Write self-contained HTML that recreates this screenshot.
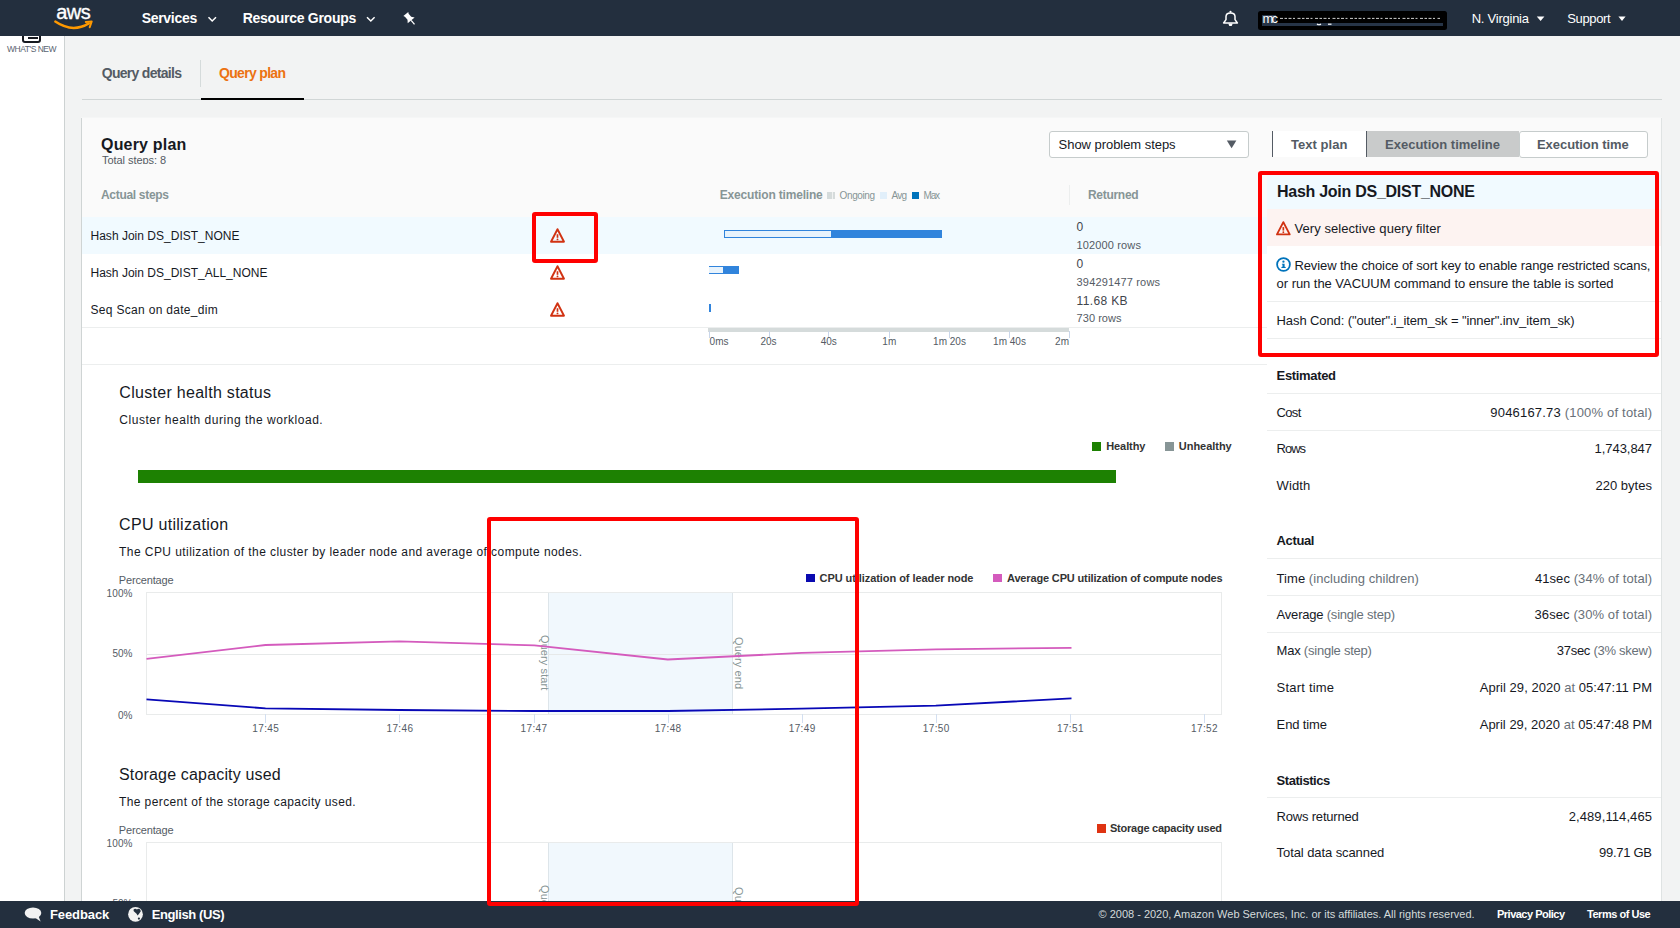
<!DOCTYPE html>
<html><head><meta charset="utf-8"><style>
html,body{margin:0;padding:0;}
body{width:1680px;height:928px;overflow:hidden;position:relative;background:#f2f3f3;font-family:"Liberation Sans", sans-serif;}
.t{position:absolute;white-space:nowrap;line-height:1;}
svg{position:absolute;overflow:visible;}
</style></head><body>
<div style="position:absolute;left:0px;top:36px;width:64px;height:865px;background:#fff;"></div><div style="position:absolute;left:64px;top:36px;width:1px;height:865px;background:#cdd2d2;"></div><div style="position:absolute;left:22px;top:28px;width:19px;height:15px;border:2.5px solid #16191f;border-radius:3px;box-sizing:border-box"></div><div style="position:absolute;left:28px;top:37px;width:10px;height:1.5px;background:#16191f;"></div><div style="position:absolute;left:0px;top:0px;width:1680px;height:36px;background:#232f3e;"></div><svg style="left:0;top:0" width="120" height="36"><text x="56.3" y="18.5" font-family="Liberation Sans" font-size="20" fill="#fff" stroke="#fff" stroke-width="0.35" letter-spacing="-0.6">aws</text><path d="M55.3 21.6 Q72.5 33.3 88.8 23.4" stroke="#ff9900" stroke-width="2.4" fill="none" stroke-linecap="round"/><path d="M85.8 21.9 L91.7 21.5 L89.7 27.2" stroke="#ff9900" stroke-width="2" fill="none" stroke-linecap="round" stroke-linejoin="round"/></svg><svg style="left:0;top:0" width="420" height="36"><polyline points="208.5,17.2 212.2,21 216,17.2" stroke="#fff" stroke-width="1.5" fill="none"/><polyline points="367,17.2 370.8,21 374.6,17.2" stroke="#fff" stroke-width="1.5" fill="none"/><g transform="translate(410,19) rotate(-40)"><path d="M-3.2 -6.5 L3.2 -6.5 L2.4 -5 L2.4 -1 L4.5 1.8 L-4.5 1.8 L-2.4 -1 L-2.4 -5 Z" fill="#fff"/><path d="M0 1.8 L0 7" stroke="#fff" stroke-width="1.3"/></g></svg><svg style="left:0;top:0" width="1680" height="36"><path d="M1223.6 23 L1237.4 23 L1235 19.6 L1235 16.6 C1235 14.1 1233.2 12.9 1230.5 12.9 C1227.8 12.9 1226 14.1 1226 16.6 L1226 19.6 Z" stroke="#fff" stroke-width="1.5" fill="none" stroke-linejoin="round"/><circle cx="1230.5" cy="11.8" r="1.1" fill="#fff"/><path d="M1228.3 23.6 L1232.7 23.6 L1231.7 25.9 L1229.3 25.9 Z" fill="#fff"/></svg><div style="position:absolute;left:1258.2px;top:11.2px;width:188.7px;height:18.5px;background:#000;border-radius:2.5px"></div><div style="position:absolute;left:1262.2px;top:15px;width:14.3px;height:8.5px;background:#2c3a4c;"></div><div style="position:absolute;left:1262.2px;top:23.3px;width:181px;height:2.7px;background:#263447;"></div><svg style="left:0;top:0" width="1680" height="36"><path d="M1280 18.4 L1440 18.4" stroke="#fff" stroke-width="0.9" stroke-dasharray="3 1.5 2.5 1.5 3 1.5 2 2.5" opacity="0.9"/><path d="M1317 24 q2 1.5 4 0" stroke="#fff" stroke-width="1.2" fill="none"/><path d="M1328 24.2 l3.5 0" stroke="#fff" stroke-width="1.2"/></svg><svg style="left:0;top:0" width="1680" height="36"><path d="M1536.8 16.6 L1544.4 16.6 L1540.6 21 Z" fill="#fff"/><path d="M1618.4 16.6 L1625.6 16.6 L1622 21 Z" fill="#fff"/></svg><div style="position:absolute;left:200px;top:60px;width:1px;height:27px;background:#d5dbdb;"></div><div style="position:absolute;left:82px;top:99px;width:1580px;height:1px;background:#d1d6d6;"></div><div style="position:absolute;left:201px;top:97.7px;width:103px;height:2.5px;background:#000;"></div><div style="position:absolute;left:81px;top:117px;width:1581px;height:1px;background:#f5f6f6;"></div><div style="position:absolute;left:81px;top:118px;width:1581px;height:810px;background:#fafafa;"></div><div style="position:absolute;left:81px;top:118px;width:1px;height:810px;background:#cfd4d4;"></div><div style="position:absolute;left:1661px;top:118px;width:1px;height:810px;background:#dfe3e3;"></div><div style="position:absolute;left:82px;top:217px;width:1185px;height:684px;background:#fff;"></div><div style="position:absolute;left:1267px;top:175px;width:394px;height:726px;background:#fff;"></div><div style="position:absolute;left:95px;top:150px;width:100px;height:14px;overflow:hidden"><div class="t" style="left:7px;top:4.69px;font-size:11px;color:#545b64;letter-spacing:-0.05px">Total steps: 8</div></div><div style="position:absolute;left:1049px;top:130.5px;width:200px;height:27px;background:#fff;border:1px solid #c6cccc;border-radius:3px;box-sizing:border-box"></div><svg style="left:0;top:0" width="1680" height="200"><path d="M1226.8 140.6 L1236.4 140.6 L1231.6 148.2 Z" fill="#545b64"/></svg><div style="position:absolute;left:1272px;top:131px;width:95px;height:26px;background:#fff;border-left:1.5px solid #545b64;border-right:1.5px solid #545b64;box-sizing:border-box"></div><div style="position:absolute;left:1367px;top:131px;width:152px;height:26px;background:#c9cbcb;"></div><div style="position:absolute;left:1518.5px;top:130.5px;width:129.5px;height:27px;background:#fff;border:1px solid #c6cccc;border-radius:3px;box-sizing:border-box"></div><div style="position:absolute;left:827.2px;top:192.4px;width:7.8px;height:6.5px;background:#d5dbdb;"></div><div style="position:absolute;left:831.6px;top:192.4px;width:1.8px;height:6.5px;background:#f0f2f2;"></div><div style="position:absolute;left:880.3px;top:192.4px;width:7px;height:6.5px;background:#e1effa;"></div><div style="position:absolute;left:912px;top:192.4px;width:7px;height:6.5px;background:#0073bb;"></div><div style="position:absolute;left:1069px;top:184.5px;width:1px;height:20.5px;background:#eceeee;"></div><div style="position:absolute;left:82px;top:217.3px;width:1185px;height:36.7px;background:#f1faff;"></div><div style="position:absolute;left:82px;top:327px;width:1185px;height:1px;background:#eceeee;"></div><div style="position:absolute;left:82px;top:364px;width:1185px;height:1px;background:#eceeee;"></div><svg style="left:549.9px;top:228.4px" width="15.0" height="14.6" viewBox="0 0 15 14.6"><path d="M7.5 1.2 L14 13.7 L1 13.7 Z" stroke="#d13212" stroke-width="1.9" fill="none" stroke-linejoin="round"/><path d="M7.5 6.2 L7.5 9.8" stroke="#d13212" stroke-width="1.7"/><circle cx="7.5" cy="11.4" r="0.95" fill="#d13212"/></svg><svg style="left:549.9px;top:265.0px" width="15.0" height="14.6" viewBox="0 0 15 14.6"><path d="M7.5 1.2 L14 13.7 L1 13.7 Z" stroke="#d13212" stroke-width="1.9" fill="none" stroke-linejoin="round"/><path d="M7.5 6.2 L7.5 9.8" stroke="#d13212" stroke-width="1.7"/><circle cx="7.5" cy="11.4" r="0.95" fill="#d13212"/></svg><svg style="left:549.9px;top:302.0px" width="15.0" height="14.6" viewBox="0 0 15 14.6"><path d="M7.5 1.2 L14 13.7 L1 13.7 Z" stroke="#d13212" stroke-width="1.9" fill="none" stroke-linejoin="round"/><path d="M7.5 6.2 L7.5 9.8" stroke="#d13212" stroke-width="1.7"/><circle cx="7.5" cy="11.4" r="0.95" fill="#d13212"/></svg><div style="position:absolute;left:723.5px;top:229.8px;width:108px;height:8px;background:#e8f3fc;border:1.2px solid #3184dc;border-right:none;box-sizing:border-box"></div><div style="position:absolute;left:831.3px;top:229.8px;width:110.7px;height:8px;background:#3184dc;"></div><div style="position:absolute;left:709px;top:266px;width:14px;height:8.2px;background:#e8f3fc;border:1.2px solid #3184dc;border-left:none;border-right:none;box-sizing:border-box"></div><div style="position:absolute;left:723px;top:266px;width:16px;height:8.2px;background:#3184dc;"></div><div style="position:absolute;left:709px;top:304px;width:2.2px;height:8px;background:#3184dc;"></div><div style="position:absolute;left:708.3px;top:327.7px;width:360.7px;height:4px;background:#d5dbdb;"></div><div style="position:absolute;left:708.7px;top:331px;width:1px;height:7px;background:#c9d6ea;"></div><div style="position:absolute;left:768.5px;top:331px;width:1px;height:7px;background:#c9d6ea;"></div><div style="position:absolute;left:828.3px;top:331px;width:1px;height:7px;background:#c9d6ea;"></div><div style="position:absolute;left:889.3px;top:331px;width:1px;height:7px;background:#c9d6ea;"></div><div style="position:absolute;left:949.3px;top:331px;width:1px;height:7px;background:#c9d6ea;"></div><div style="position:absolute;left:1009.3px;top:331px;width:1px;height:7px;background:#c9d6ea;"></div><div style="position:absolute;left:1068.5px;top:331px;width:1px;height:7px;background:#c9d6ea;"></div><div style="position:absolute;left:1267px;top:175px;width:394px;height:34.2px;background:#f1faff;"></div><div style="position:absolute;left:1267px;top:209.2px;width:394px;height:37.3px;background:#fdf3f1;"></div><svg style="left:1276.0px;top:221.2px" width="14.7" height="14.3" viewBox="0 0 15 14.6"><path d="M7.5 1.2 L14 13.7 L1 13.7 Z" stroke="#d13212" stroke-width="1.9" fill="none" stroke-linejoin="round"/><path d="M7.5 6.2 L7.5 9.8" stroke="#d13212" stroke-width="1.7"/><circle cx="7.5" cy="11.4" r="0.95" fill="#d13212"/></svg><svg style="left:1275.8px;top:257.3px" width="15" height="15" viewBox="0 0 15 15"><circle cx="7.5" cy="7.5" r="6.4" stroke="#0073bb" stroke-width="1.8" fill="none"/><circle cx="7.45" cy="4.7" r="1.15" fill="#0073bb"/><path d="M5.9 6.7 L8.6 6.7 L8.6 9.7 L9.7 10.1 L9.7 11 L5.4 11 L5.4 10.1 L6.5 9.7 L6.5 7.6 L5.9 7.5 Z" fill="#0073bb"/></svg><div style="position:absolute;left:1267px;top:301px;width:394px;height:1px;background:#eceeee;"></div><div style="position:absolute;left:1267px;top:338px;width:394px;height:1px;background:#eceeee;"></div><div style="position:absolute;left:1267px;top:393px;width:394px;height:1px;background:#eceeee;"></div><div style="position:absolute;left:1267px;top:430px;width:394px;height:1px;background:#eceeee;"></div><div style="position:absolute;left:1267px;top:557.8px;width:394px;height:1px;background:#eceeee;"></div><div style="position:absolute;left:1267px;top:595px;width:394px;height:1px;background:#eceeee;"></div><div style="position:absolute;left:1267px;top:632.3px;width:394px;height:1px;background:#eceeee;"></div><div style="position:absolute;left:1267px;top:797.2px;width:394px;height:1px;background:#eceeee;"></div><div style="position:absolute;left:1091.9px;top:441.5px;width:9.1px;height:9.3px;background:#1d8102;"></div><div style="position:absolute;left:1164.8px;top:441.5px;width:9.2px;height:9.3px;background:#879596;"></div><div style="position:absolute;left:137.5px;top:470.2px;width:978.2px;height:12.8px;background:#1d8102;"></div><div style="position:absolute;left:146px;top:592px;width:1076px;height:122.5px;background:#fff;border:1px solid #e9ebeb;box-sizing:border-box"></div><div style="position:absolute;left:548.4px;top:593px;width:185px;height:121px;background:#f1f8fd;border-left:1px solid #dde5ea;border-right:1px solid #dde5ea;box-sizing:border-box"></div><div style="position:absolute;left:147px;top:654px;width:1074px;height:1px;background:#e6e9e9;"></div><div class="t" style="left:549.7px;top:634.8px;font-size:11px;color:#879596;transform-origin:0 0;transform:rotate(90deg);letter-spacing:0.1px">Query start</div><div class="t" style="left:744.1px;top:636.9px;font-size:11px;color:#879596;transform-origin:0 0;transform:rotate(90deg);letter-spacing:0.1px">Query end</div><div style="position:absolute;left:265.3px;top:714px;width:1px;height:9px;background:#d3dff0;"></div><div style="position:absolute;left:399.4px;top:714px;width:1px;height:9px;background:#d3dff0;"></div><div style="position:absolute;left:533.5px;top:714px;width:1px;height:9px;background:#d3dff0;"></div><div style="position:absolute;left:667.5999999999999px;top:714px;width:1px;height:9px;background:#d3dff0;"></div><div style="position:absolute;left:801.7px;top:714px;width:1px;height:9px;background:#d3dff0;"></div><div style="position:absolute;left:935.8px;top:714px;width:1px;height:9px;background:#d3dff0;"></div><div style="position:absolute;left:1069.8999999999999px;top:714px;width:1px;height:9px;background:#d3dff0;"></div><div style="position:absolute;left:1204.0px;top:714px;width:1px;height:9px;background:#d3dff0;"></div><div style="position:absolute;left:805.5px;top:573.8px;width:9.1px;height:8.6px;background:#0a0ab0;"></div><div style="position:absolute;left:992.8px;top:573.8px;width:9.4px;height:8.6px;background:#d45bbd;"></div><svg style="left:0;top:0" width="1680" height="928"><polyline points="146.5,658.8 265.5,645 399.4,641.4 534.3,645.4 667.8,659.5 801.7,652.9 935.8,649.3 1071.5,647.9" stroke="#d45bbd" stroke-width="1.8" fill="none" stroke-linejoin="round"/><polyline points="146.5,699.3 265.5,708.4 399.4,710 534.3,711 667.8,711 801.7,708.6 935.8,705.6 1071.5,698.4" stroke="#0808b6" stroke-width="1.8" fill="none" stroke-linejoin="round"/></svg><div style="position:absolute;left:146px;top:842px;width:1076px;height:122.5px;background:#fff;border:1px solid #e9ebeb;box-sizing:border-box"></div><div style="position:absolute;left:548.4px;top:843px;width:185px;height:121px;background:#f1f8fd;border-left:1px solid #dde5ea;border-right:1px solid #dde5ea;box-sizing:border-box"></div><div style="position:absolute;left:147px;top:904px;width:1074px;height:1px;background:#e6e9e9;"></div><div class="t" style="left:549.7px;top:884.8px;font-size:11px;color:#879596;transform-origin:0 0;transform:rotate(90deg);letter-spacing:0.1px">Query start</div><div class="t" style="left:744.1px;top:886.9px;font-size:11px;color:#879596;transform-origin:0 0;transform:rotate(90deg);letter-spacing:0.1px">Query end</div><div style="position:absolute;left:265.3px;top:964px;width:1px;height:9px;background:#d3dff0;"></div><div style="position:absolute;left:399.4px;top:964px;width:1px;height:9px;background:#d3dff0;"></div><div style="position:absolute;left:533.5px;top:964px;width:1px;height:9px;background:#d3dff0;"></div><div style="position:absolute;left:667.5999999999999px;top:964px;width:1px;height:9px;background:#d3dff0;"></div><div style="position:absolute;left:801.7px;top:964px;width:1px;height:9px;background:#d3dff0;"></div><div style="position:absolute;left:935.8px;top:964px;width:1px;height:9px;background:#d3dff0;"></div><div style="position:absolute;left:1069.8999999999999px;top:964px;width:1px;height:9px;background:#d3dff0;"></div><div style="position:absolute;left:1204.0px;top:964px;width:1px;height:9px;background:#d3dff0;"></div><div style="position:absolute;left:1097px;top:823.5px;width:8.8px;height:9px;background:#df3312;"></div><div class="t" id="t0" style="top:45.10px;font-size:8.5px;font-weight:400;color:#5a6470;letter-spacing:-0.477px;left:7.00px;">WHAT&#x27;S NEW</div><div class="t" id="t1" style="top:11.05px;font-size:14px;font-weight:700;color:#fff;letter-spacing:-0.301px;left:141.70px;">Services</div><div class="t" id="t2" style="top:11.05px;font-size:14px;font-weight:700;color:#fff;letter-spacing:-0.292px;left:242.80px;">Resource Groups</div><div class="t" id="t3" style="top:11.70px;font-size:13px;font-weight:400;color:#fff;letter-spacing:-2.000px;left:1262.60px;">mc</div><div class="t" id="t4" style="top:12.30px;font-size:13px;font-weight:400;color:#fff;letter-spacing:-0.243px;left:1471.70px;">N. Virginia</div><div class="t" id="t5" style="top:12.30px;font-size:13px;font-weight:400;color:#fff;letter-spacing:-0.358px;left:1567.30px;">Support</div><div class="t" id="t6" style="top:66.45px;font-size:14px;font-weight:700;color:#545b64;letter-spacing:-0.700px;left:101.70px;">Query details</div><div class="t" id="t7" style="top:66.45px;font-size:14px;font-weight:700;color:#ec7211;letter-spacing:-0.682px;left:219.00px;">Query plan</div><div class="t" id="t8" style="top:137.06px;font-size:16px;font-weight:700;color:#16191f;letter-spacing:0.191px;left:101.00px;">Query plan</div><div class="t" id="t9" style="top:138.00px;font-size:13px;font-weight:400;color:#16191f;letter-spacing:-0.046px;left:1058.60px;">Show problem steps</div><div class="t" id="t10" style="top:138.25px;font-size:13px;font-weight:700;color:#545b64;letter-spacing:0.049px;left:1291.00px;">Text plan</div><div class="t" id="t11" style="top:138.25px;font-size:13px;font-weight:700;color:#545b64;letter-spacing:0.007px;left:1385.00px;">Execution timeline</div><div class="t" id="t12" style="top:138.25px;font-size:13px;font-weight:700;color:#545b64;letter-spacing:-0.055px;left:1537.00px;">Execution time</div><div class="t" id="t13" style="top:188.64px;font-size:12px;font-weight:700;color:#879596;letter-spacing:-0.305px;left:101.00px;">Actual steps</div><div class="t" id="t14" style="top:188.74px;font-size:12px;font-weight:700;color:#879596;letter-spacing:-0.178px;left:719.80px;">Execution timeline</div><div class="t" id="t15" style="top:190.53px;font-size:10px;font-weight:400;color:#879596;letter-spacing:-0.402px;left:839.60px;">Ongoing</div><div class="t" id="t16" style="top:190.53px;font-size:10px;font-weight:400;color:#879596;letter-spacing:-0.731px;left:891.40px;">Avg</div><div class="t" id="t17" style="top:190.53px;font-size:10px;font-weight:400;color:#879596;letter-spacing:-1.253px;left:923.60px;">Max</div><div class="t" id="t18" style="top:188.94px;font-size:12px;font-weight:700;color:#879596;letter-spacing:-0.296px;left:1088.00px;">Returned</div><div class="t" id="t19" style="top:229.64px;font-size:12px;font-weight:400;color:#16191f;letter-spacing:0.013px;left:90.50px;">Hash Join DS_DIST_NONE</div><div class="t" id="t20" style="top:267.04px;font-size:12px;font-weight:400;color:#16191f;letter-spacing:0.010px;left:90.50px;">Hash Join DS_DIST_ALL_NONE</div><div class="t" id="t21" style="top:303.84px;font-size:12px;font-weight:400;color:#16191f;letter-spacing:0.309px;left:90.50px;">Seq Scan on date_dim</div><div class="t" id="t22" style="top:220.84px;font-size:12px;font-weight:400;color:#3f454c;left:1076.60px;">0</div><div class="t" id="t23" style="top:239.79px;font-size:11px;font-weight:400;color:#545b64;letter-spacing:0.130px;left:1076.60px;">102000 rows</div><div class="t" id="t24" style="top:258.14px;font-size:12px;font-weight:400;color:#3f454c;left:1076.60px;">0</div><div class="t" id="t25" style="top:276.89px;font-size:11px;font-weight:400;color:#545b64;letter-spacing:0.158px;left:1076.60px;">394291477 rows</div><div class="t" id="t26" style="top:294.54px;font-size:12px;font-weight:400;color:#3f454c;letter-spacing:0.359px;left:1076.60px;">11.68 KB</div><div class="t" id="t27" style="top:312.59px;font-size:11px;font-weight:400;color:#545b64;letter-spacing:0.037px;left:1076.60px;">730 rows</div><div class="t" id="t28" style="top:337.14px;font-size:10px;font-weight:400;color:#545b64;letter-spacing:0.047px;left:709.60px;">0ms</div><div class="t" id="t29" style="top:337.14px;font-size:10px;font-weight:400;color:#545b64;left:768.50px;transform:translateX(-50%);">20s</div><div class="t" id="t30" style="top:337.14px;font-size:10px;font-weight:400;color:#545b64;left:828.80px;transform:translateX(-50%);">40s</div><div class="t" id="t31" style="top:337.14px;font-size:10px;font-weight:400;color:#545b64;left:889.30px;transform:translateX(-50%);">1m</div><div class="t" id="t32" style="top:337.14px;font-size:10px;font-weight:400;color:#545b64;left:949.50px;transform:translateX(-50%);">1m 20s</div><div class="t" id="t33" style="top:337.14px;font-size:10px;font-weight:400;color:#545b64;left:1009.50px;transform:translateX(-50%);">1m 40s</div><div class="t" id="t34" style="top:337.14px;font-size:10px;font-weight:400;color:#545b64;right:611.00px;">2m</div><div class="t" id="t35" style="top:183.96px;font-size:16px;font-weight:700;color:#16191f;letter-spacing:-0.267px;left:1277.00px;">Hash Join DS_DIST_NONE</div><div class="t" id="t36" style="top:222.10px;font-size:13px;font-weight:400;color:#16191f;letter-spacing:0.076px;left:1294.40px;">Very selective query filter</div><div class="t" id="t37" style="top:258.60px;font-size:13px;font-weight:400;color:#16191f;letter-spacing:-0.085px;left:1294.40px;">Review the choice of sort key to enable range restricted scans,</div><div class="t" id="t38" style="top:276.50px;font-size:13px;font-weight:400;color:#16191f;letter-spacing:-0.044px;left:1276.60px;">or run the VACUUM command to ensure the table is sorted</div><div class="t" id="t39" style="top:314.00px;font-size:13px;font-weight:400;color:#16191f;letter-spacing:-0.108px;left:1276.60px;">Hash Cond: (&quot;outer&quot;.i_item_sk = &quot;inner&quot;.inv_item_sk)</div><div class="t" id="t40" style="top:369.20px;font-size:13px;font-weight:700;color:#16191f;letter-spacing:-0.343px;left:1276.60px;">Estimated</div><div class="t" id="t41" style="top:406.40px;font-size:13px;font-weight:400;color:#16191f;letter-spacing:-0.678px;left:1276.60px;">Cost</div><div class="t" id="t42" style="top:406.40px;font-size:13px;font-weight:400;color:#16191f;letter-spacing:0.194px;right:27.81px;">9046167.73 <span style="color:#687078">(100% of total)</span></div><div class="t" id="t43" style="top:442.30px;font-size:13px;font-weight:400;color:#16191f;letter-spacing:-1.039px;left:1276.60px;">Rows</div><div class="t" id="t44" style="top:442.30px;font-size:13px;font-weight:400;color:#16191f;letter-spacing:-0.043px;right:28.04px;">1,743,847</div><div class="t" id="t45" style="top:479.25px;font-size:13px;font-weight:400;color:#16191f;letter-spacing:0.091px;left:1276.60px;">Width</div><div class="t" id="t46" style="top:479.25px;font-size:13px;font-weight:400;color:#16191f;letter-spacing:0.028px;right:27.97px;">220 bytes</div><div class="t" id="t47" style="top:534.40px;font-size:13px;font-weight:700;color:#16191f;letter-spacing:-0.387px;left:1276.60px;">Actual</div><div class="t" id="t48" style="top:571.70px;font-size:13px;font-weight:400;color:#16191f;letter-spacing:0.048px;left:1276.60px;">Time <span style="color:#687078">(including children)</span></div><div class="t" id="t49" style="top:571.70px;font-size:13px;font-weight:400;color:#16191f;letter-spacing:0.077px;right:27.92px;">41sec <span style="color:#687078">(34% of total)</span></div><div class="t" id="t50" style="top:608.40px;font-size:13px;font-weight:400;color:#16191f;letter-spacing:-0.210px;left:1276.60px;">Average <span style="color:#687078">(single step)</span></div><div class="t" id="t51" style="top:608.40px;font-size:13px;font-weight:400;color:#16191f;letter-spacing:0.098px;right:27.90px;">36sec <span style="color:#687078">(30% of total)</span></div><div class="t" id="t52" style="top:643.70px;font-size:13px;font-weight:400;color:#16191f;letter-spacing:-0.230px;left:1276.60px;">Max <span style="color:#687078">(single step)</span></div><div class="t" id="t53" style="top:643.70px;font-size:13px;font-weight:400;color:#16191f;letter-spacing:-0.264px;right:28.26px;">37sec <span style="color:#687078">(3% skew)</span></div><div class="t" id="t54" style="top:681.00px;font-size:13px;font-weight:400;color:#16191f;letter-spacing:0.208px;left:1276.60px;">Start time</div><div class="t" id="t55" style="top:681.00px;font-size:13px;font-weight:400;color:#16191f;letter-spacing:0.044px;right:27.96px;">April 29, 2020 <span style="color:#687078">at</span> 05:47:11 PM</div><div class="t" id="t56" style="top:718.00px;font-size:13px;font-weight:400;color:#16191f;letter-spacing:-0.130px;left:1276.60px;">End time</div><div class="t" id="t57" style="top:718.00px;font-size:13px;font-weight:400;color:#16191f;letter-spacing:0.010px;right:27.99px;">April 29, 2020 <span style="color:#687078">at</span> 05:47:48 PM</div><div class="t" id="t58" style="top:773.50px;font-size:13px;font-weight:700;color:#16191f;letter-spacing:-0.468px;left:1276.60px;">Statistics</div><div class="t" id="t59" style="top:809.80px;font-size:13px;font-weight:400;color:#16191f;letter-spacing:-0.196px;left:1276.60px;">Rows returned</div><div class="t" id="t60" style="top:809.80px;font-size:13px;font-weight:400;color:#16191f;letter-spacing:0.094px;right:27.91px;">2,489,114,465</div><div class="t" id="t61" style="top:845.90px;font-size:13px;font-weight:400;color:#16191f;letter-spacing:-0.085px;left:1276.60px;">Total data scanned</div><div class="t" id="t62" style="top:845.90px;font-size:13px;font-weight:400;color:#16191f;letter-spacing:-0.291px;right:28.29px;">99.71 GB</div><div class="t" id="t63" style="top:384.96px;font-size:16px;font-weight:400;color:#16191f;letter-spacing:0.292px;left:119.30px;">Cluster health status</div><div class="t" id="t64" style="top:413.59px;font-size:12px;font-weight:400;color:#16191f;letter-spacing:0.528px;left:119.30px;">Cluster health during the workload.</div><div class="t" id="t65" style="top:440.69px;font-size:11px;font-weight:700;color:#333;letter-spacing:-0.075px;left:1106.20px;">Healthy</div><div class="t" id="t66" style="top:440.69px;font-size:11px;font-weight:700;color:#333;letter-spacing:-0.036px;left:1178.80px;">Unhealthy</div><div class="t" id="t67" style="top:574.59px;font-size:11px;font-weight:400;color:#545b64;letter-spacing:-0.152px;left:118.75px;">Percentage</div><div class="t" id="t68" style="top:588.53px;font-size:10px;font-weight:400;color:#545b64;letter-spacing:0.107px;right:1547.39px;">100%</div><div class="t" id="t69" style="top:649.43px;font-size:10px;font-weight:400;color:#545b64;right:1547.50px;">50%</div><div class="t" id="t70" style="top:710.53px;font-size:10px;font-weight:400;color:#545b64;right:1547.50px;">0%</div><div class="t" id="t71" style="top:724.03px;font-size:10px;font-weight:400;color:#545b64;letter-spacing:0.367px;left:265.80px;transform:translateX(-50%);">17:45</div><div class="t" id="t72" style="top:724.03px;font-size:10px;font-weight:400;color:#545b64;letter-spacing:0.367px;left:399.90px;transform:translateX(-50%);">17:46</div><div class="t" id="t73" style="top:724.03px;font-size:10px;font-weight:400;color:#545b64;letter-spacing:0.367px;left:534.00px;transform:translateX(-50%);">17:47</div><div class="t" id="t74" style="top:724.03px;font-size:10px;font-weight:400;color:#545b64;letter-spacing:0.367px;left:668.10px;transform:translateX(-50%);">17:48</div><div class="t" id="t75" style="top:724.03px;font-size:10px;font-weight:400;color:#545b64;letter-spacing:0.367px;left:802.20px;transform:translateX(-50%);">17:49</div><div class="t" id="t76" style="top:724.03px;font-size:10px;font-weight:400;color:#545b64;letter-spacing:0.367px;left:936.30px;transform:translateX(-50%);">17:50</div><div class="t" id="t77" style="top:724.03px;font-size:10px;font-weight:400;color:#545b64;letter-spacing:0.367px;left:1070.40px;transform:translateX(-50%);">17:51</div><div class="t" id="t78" style="top:724.03px;font-size:10px;font-weight:400;color:#545b64;letter-spacing:0.367px;left:1204.50px;transform:translateX(-50%);">17:52</div><div class="t" id="t79" style="top:573.09px;font-size:11px;font-weight:700;color:#333;letter-spacing:-0.064px;left:819.50px;">CPU utilization of leader node</div><div class="t" id="t80" style="top:573.09px;font-size:11px;font-weight:700;color:#333;letter-spacing:-0.150px;left:1007.00px;">Average CPU utilization of compute nodes</div><div class="t" id="t81" style="top:517.26px;font-size:16px;font-weight:400;color:#16191f;letter-spacing:0.290px;left:119.10px;">CPU utilization</div><div class="t" id="t82" style="top:545.74px;font-size:12px;font-weight:400;color:#16191f;letter-spacing:0.428px;left:119.10px;">The CPU utilization of the cluster by leader node and average of compute nodes.</div><div class="t" id="t83" style="top:767.26px;font-size:16px;font-weight:400;color:#16191f;letter-spacing:0.169px;left:119.00px;">Storage capacity used</div><div class="t" id="t84" style="top:795.74px;font-size:12px;font-weight:400;color:#16191f;letter-spacing:0.397px;left:119.00px;">The percent of the storage capacity used.</div><div class="t" id="t85" style="top:824.59px;font-size:11px;font-weight:400;color:#545b64;letter-spacing:-0.152px;left:118.75px;">Percentage</div><div class="t" id="t86" style="top:838.53px;font-size:10px;font-weight:400;color:#545b64;letter-spacing:0.107px;right:1547.39px;">100%</div><div class="t" id="t87" style="top:899.43px;font-size:10px;font-weight:400;color:#545b64;right:1547.50px;">50%</div><div class="t" id="t88" style="top:960.53px;font-size:10px;font-weight:400;color:#545b64;right:1547.50px;">0%</div><div class="t" id="t89" style="top:974.03px;font-size:10px;font-weight:400;color:#545b64;letter-spacing:0.367px;left:265.80px;transform:translateX(-50%);">17:45</div><div class="t" id="t90" style="top:974.03px;font-size:10px;font-weight:400;color:#545b64;letter-spacing:0.367px;left:399.90px;transform:translateX(-50%);">17:46</div><div class="t" id="t91" style="top:974.03px;font-size:10px;font-weight:400;color:#545b64;letter-spacing:0.367px;left:534.00px;transform:translateX(-50%);">17:47</div><div class="t" id="t92" style="top:974.03px;font-size:10px;font-weight:400;color:#545b64;letter-spacing:0.367px;left:668.10px;transform:translateX(-50%);">17:48</div><div class="t" id="t93" style="top:974.03px;font-size:10px;font-weight:400;color:#545b64;letter-spacing:0.367px;left:802.20px;transform:translateX(-50%);">17:49</div><div class="t" id="t94" style="top:974.03px;font-size:10px;font-weight:400;color:#545b64;letter-spacing:0.367px;left:936.30px;transform:translateX(-50%);">17:50</div><div class="t" id="t95" style="top:974.03px;font-size:10px;font-weight:400;color:#545b64;letter-spacing:0.367px;left:1070.40px;transform:translateX(-50%);">17:51</div><div class="t" id="t96" style="top:974.03px;font-size:10px;font-weight:400;color:#545b64;letter-spacing:0.367px;left:1204.50px;transform:translateX(-50%);">17:52</div><div class="t" id="t97" style="top:822.89px;font-size:11px;font-weight:700;color:#333;letter-spacing:-0.239px;left:1110.00px;">Storage capacity used</div><div style="position:absolute;left:0px;top:901px;width:1680px;height:27px;background:#232f3e;"></div><svg style="left:0;top:901px" width="260" height="27"><ellipse cx="33" cy="12" rx="8.3" ry="5.6" fill="#f2f2f2"/><path d="M34 16 L40.6 20.4 L38.6 15.2 Z" fill="#f2f2f2"/><circle cx="135.5" cy="13.3" r="7.4" fill="#f2f2f2"/><path d="M133.6 8.4 Q135.4 7.2 136.9 8.6 Q138.4 7.2 140.2 8.4 L140.8 10.2 Q139.2 12.6 137.6 14.6 Q136.6 12.4 134.6 11.1 Q133.1 10.1 133.6 8.4 Z" fill="#232f3e"/><circle cx="138.9" cy="17.6" r="1.1" fill="#232f3e"/></svg><div class="t" id="t98" style="top:907.75px;font-size:13px;font-weight:700;color:#fff;letter-spacing:-0.098px;left:50.00px;">Feedback</div><div class="t" id="t99" style="top:907.75px;font-size:13px;font-weight:700;color:#fff;letter-spacing:-0.416px;left:151.80px;">English (US)</div><div class="t" id="t100" style="top:908.89px;font-size:11px;font-weight:400;color:#d5dbdb;letter-spacing:-0.013px;left:1098.60px;">© 2008 - 2020, Amazon Web Services, Inc. or its affiliates. All rights reserved.</div><div class="t" id="t101" style="top:908.89px;font-size:11px;font-weight:700;color:#fff;letter-spacing:-0.508px;left:1497.00px;">Privacy Policy</div><div class="t" id="t102" style="top:908.89px;font-size:11px;font-weight:700;color:#fff;letter-spacing:-0.470px;left:1587.00px;">Terms of Use</div><div style="position:absolute;left:532px;top:212px;width:66px;height:51px;border:4px solid #ff0000;border-radius:3px;box-sizing:border-box"></div><div style="position:absolute;left:1258px;top:171px;width:401px;height:186px;border:4px solid #ff0000;border-radius:3px;box-sizing:border-box"></div><div style="position:absolute;left:487px;top:517px;width:372px;height:389px;border:4px solid #ff0000;border-radius:3px;box-sizing:border-box"></div>
</body></html>
